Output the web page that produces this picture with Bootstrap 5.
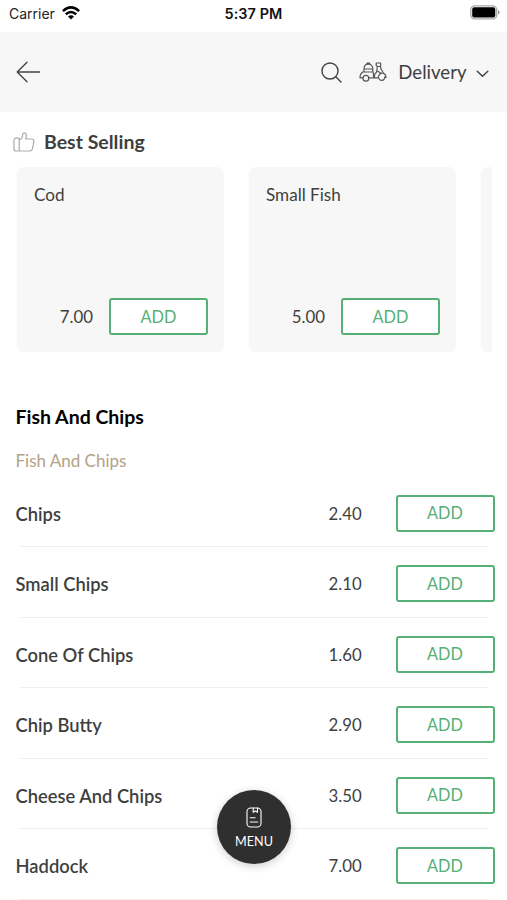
<!DOCTYPE html>
<html lang="en">
<head>
<meta charset="utf-8">
<meta name="viewport" content="width=device-width, initial-scale=1">
<title>Fish And Chips</title>
<link href="https://cdn.jsdelivr.net/npm/bootstrap@5.3.0/dist/css/bootstrap.min.css" rel="stylesheet">
<style>
  body { font-family: Lato, sans-serif; font-size: 18px; line-height: 24px; color: #3f3f3f; background: #fff; height: 900px; overflow: hidden; }
  svg { display: block; flex: none; }
  .status { height: 32px; font-family: Inter, sans-serif; font-size: 14px; line-height: 20px; padding: 4px 9px 0 9px; color: #222; }
  .status > div { flex: 1 1 0; }
  .status .clock { flex: none; font-weight: 600; font-size: 14.4px; letter-spacing: .1px; color: #111; }
  .topbar { height: 80px; background: #f7f7f7; padding: 0 18.5px 0 16px; }
  .mode-label { margin-left: 11.5px; font-size: 18.6px; }
  .best-title { font-size: 19.5px; font-weight: 700; padding: 18px 0 0 13px; gap: 9px; }
  .rail { margin: 13px 15px 0 17px; gap: 25px; height: 185px; }
  .tile { flex: 0 0 207px; border: 0; border-radius: 7px; background: #f7f7f7; padding: 16px 16px 17px 17px; }
  .price { font-size: 16.8px; }
  .tile-name { font-size: 17.1px; }
  .btn-add { width: 99px; height: 37px; border: 2px solid #55b076; border-radius: 3px; background: #fff; color: #55b076; font-size: 16.3px; line-height: 24px; padding: 0; }
  .section-title { font-size: 19.5px; font-weight: 700; color: #000; line-height: 24px; margin: 53px 0 0 15.5px; }
  .section-sub { font-size: 17px; color: #b3a286; margin: 20px 0 0 15.5px; }
  .menu-list { margin-top: 3.8px; }
  .menu-row { height: 70.5px; padding: 18.2px 12.5px 0 15.5px; background: linear-gradient(#f0f0f0, #f0f0f0) 19px 100% / calc(100% - 38px) 1px no-repeat; }
  .menu-row .dish { font-weight: 600; font-size: 18.35px; line-height: 38px; }
  .menu-row .price { width: 67px; line-height: 37px; }
  .fab { left: 217px; top: 790px; width: 74px; height: 74px; background: #2f2f2f; color: #fff; font-size: 12.6px; line-height: 16px; padding-top: 17px; gap: 6px; box-shadow: 0 2px 9px rgba(0,0,0,.2); }
</style>
<script src="https://cdn.jsdelivr.net/npm/bootstrap@5.3.0/dist/js/bootstrap.bundle.min.js"></script>
</head>
<body class="position-relative">
<div class="status d-flex align-items-start">
  <div class="d-flex gap-2"><span>Carrier</span>
    <svg width="18" height="14" viewBox="0 0 18 14" style="margin:2px 0 0 -1px" fill="none" stroke="#000" stroke-width="2.5"><path d="M.9 5.1Q9-2.4 17.1 5.1M3.8 8.3Q9 3.7 14.2 8.3"/><path d="M6 10.4Q9 8 12 10.4L9 13.4Z" fill="#000" stroke="none"/></svg>
  </div>
  <span class="clock">5:37 PM</span>
  <div class="d-flex justify-content-end">
    <svg width="30" height="15" viewBox="0 0 30 15" style="margin:1px -2px 0 0"><rect x=".8" y=".8" width="25.9" height="13" rx="3.8" fill="#fff" stroke="#aaa" stroke-width="1.3"/><rect x="2.2" y="2.2" width="23.1" height="10.2" rx="2" fill="#000"/><path d="M28 5v4.6q1.5-.7 1.5-2.3T28 5Z" fill="#999"/></svg>
  </div>
</div>

<header class="topbar d-flex align-items-center">
  <svg width="25" height="22" viewBox="0 0 25 22" fill="none" stroke="#444" stroke-width="1.4" stroke-linecap="round" stroke-linejoin="round"><path d="M23.5 11H1.2M11 1.3 1.2 11l9.8 9.7"/></svg>
  <svg class="ms-auto" width="21" height="21" viewBox="0 0 21 21" fill="none" stroke="#444" stroke-width="1.4" stroke-linecap="round"><circle cx="9" cy="9" r="8"/><path d="m14.8 14.8 5.2 5.2"/></svg>
  <svg style="margin-left:17px" width="28" height="20" viewBox="0 0 28 20" fill="none" stroke="#555" stroke-width="1.2" stroke-linejoin="round" stroke-linecap="round"><path d="M5 10V7.2C5 4 6.7 2.2 9.3 2.2s4.5 1.8 4.5 5V10M5.2 7h8.4M8 2.2V1h2.6v1.2M3.5 10h10.7M3.6 10C1.8 11.3 1 13 1 15.8h2.9M9.9 15.8h9.4c.2-2.9 1.7-4.6 4.4-4.6M14.2 10l.5 5.8M17.2 1h4.4v3.5h-3.2L17.2 3.6ZM18.4 4.5 17.6 10l-2.1 2.6v3.2M21.4 4.5c0 2.6 1.9 4.1 3.1 6.7 1.6.7 2.5 2.2 2.5 4.2h-.8M18.8 9.2l3.8 2.2"/><circle cx="6.9" cy="16.2" r="2.9"/><path d="M19.7 15.8a2.9 2.9 0 1 0 5.9-.7"/></svg>
  <span class="mode-label">Delivery</span>
  <svg style="margin-left:9px;margin-top:3px" width="13" height="8" viewBox="0 0 13 8" fill="none" stroke="#444" stroke-width="1.5" stroke-linecap="round" stroke-linejoin="round"><path d="m1.2 1.2 5.3 5 5.3-5"/></svg>
</header>

<div class="best-title d-flex align-items-center">
  <svg width="22" height="21" viewBox="0 0 22 21" fill="none" stroke="#aaa" stroke-width="1.2" stroke-linejoin="round"><path d="M6.2 6.2H3Q1 6.2 1 8.5v8.2Q1 19 3 19h3.2ZM6.2 8.2C8.5 7 9.7 5 9.7 2.6 9.7.2 13.4.3 13.4 3.6c0 1.3-.4 2.4-.8 3.4h6c1.7 0 2.6 1.2 2.3 2.7l-1.5 7.1c-.4 1.6-1.1 2.2-2.6 2.2H6.2"/></svg>
  <span>Best Selling</span>
</div>

<div class="rail d-flex overflow-hidden">
  <div class="tile card justify-content-between">
    <div class="tile-name">Cod</div>
    <div class="d-flex align-items-center justify-content-end"><span class="price me-3">7.00</span><button class="btn btn-add">ADD</button></div>
  </div>
  <div class="tile card justify-content-between">
    <div class="tile-name">Small Fish</div>
    <div class="d-flex align-items-center justify-content-end"><span class="price me-3">5.00</span><button class="btn btn-add">ADD</button></div>
  </div>
  <div class="tile card"></div>
</div>

<h2 class="section-title">Fish And Chips</h2>
<div class="section-sub">Fish And Chips</div>

<div class="menu-list">
  <div class="menu-row d-flex align-items-start"><span class="dish me-auto">Chips</span><span class="price">2.40</span><button class="btn btn-add">ADD</button></div>
  <div class="menu-row d-flex align-items-start"><span class="dish me-auto">Small Chips</span><span class="price">2.10</span><button class="btn btn-add">ADD</button></div>
  <div class="menu-row d-flex align-items-start"><span class="dish me-auto">Cone Of Chips</span><span class="price">1.60</span><button class="btn btn-add">ADD</button></div>
  <div class="menu-row d-flex align-items-start"><span class="dish me-auto">Chip Butty</span><span class="price">2.90</span><button class="btn btn-add">ADD</button></div>
  <div class="menu-row d-flex align-items-start"><span class="dish me-auto">Cheese And Chips</span><span class="price">3.50</span><button class="btn btn-add">ADD</button></div>
  <div class="menu-row d-flex align-items-start"><span class="dish me-auto">Haddock</span><span class="price">7.00</span><button class="btn btn-add">ADD</button></div>
</div>

<div class="fab position-absolute rounded-circle d-flex flex-column align-items-center">
  <svg width="16" height="21" viewBox="0 0 16 21" fill="none" stroke="#fff" stroke-width="1.1" stroke-linecap="round" stroke-linejoin="round"><rect x="1" y="1" width="14" height="19" rx="3.6"/><path d="M7.2 1v4.3L9.3 4l2.2 1.3V1M4.2 10.8h5M4.2 15h7.5"/></svg>
  <span>MENU</span>
</div>
</body>
</html>
